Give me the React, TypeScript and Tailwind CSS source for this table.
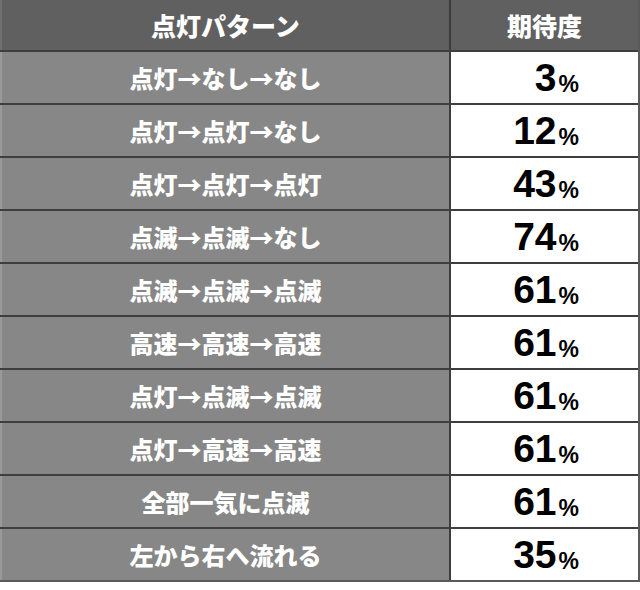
import React from "react";

const rows: [string, string][] = [
  ["点灯→なし→なし", "3"],
  ["点灯→点灯→なし", "12"],
  ["点灯→点灯→点灯", "43"],
  ["点滅→点滅→なし", "74"],
  ["点滅→点滅→点滅", "61"],
  ["高速→高速→高速", "61"],
  ["点灯→点滅→点滅", "61"],
  ["点灯→高速→高速", "61"],
  ["全部一気に点滅", "61"],
  ["左から右へ流れる", "35"],
];

const jp = { fontFamily: '"Noto Sans CJK JP", "Noto Sans", sans-serif' };
const num = { fontFamily: '"Liberation Sans", Arial, sans-serif' };

export default function App() {
  return (
    <div className="w-[640px] h-[590px] bg-white">
      <div className="w-[640px] border-r-2 border-b-2 border-[#5a5a5a]">
        <div className="flex h-[50px] bg-[#606060]">
          <div
            className="w-[449px] flex items-center justify-center text-white font-black text-[25px] leading-none border-l-2 border-[#707070]"
            style={jp}
          >
            点灯パターン
          </div>
          <div
            className="flex-1 flex items-center justify-center text-white font-black text-[25px] leading-none border-l-2 border-[#3c3c3c]"
            style={jp}
          >
            期待度
          </div>
        </div>
        {rows.map(([label, value], i) => (
          <div key={i} className="flex h-[53px] border-t-2 border-[#3e3e3e]">
            <div
              className="w-[449px] bg-[#878787] flex items-center justify-center text-white font-black text-[24px] leading-none border-l-2 border-[#999999]"
              style={jp}
            >
              {label}
            </div>
            <div
              className="flex-1 bg-white flex items-center justify-end pr-[59px] text-black border-l-2 border-[#3c3c3c]"
              style={num}
            >
              <span className="text-[39px] font-bold leading-none">{value}</span>
              <span className="text-[23px] font-bold leading-none self-center mt-[13px] ml-[2px]">%</span>
            </div>
          </div>
        ))}
      </div>
    </div>
  );
}
